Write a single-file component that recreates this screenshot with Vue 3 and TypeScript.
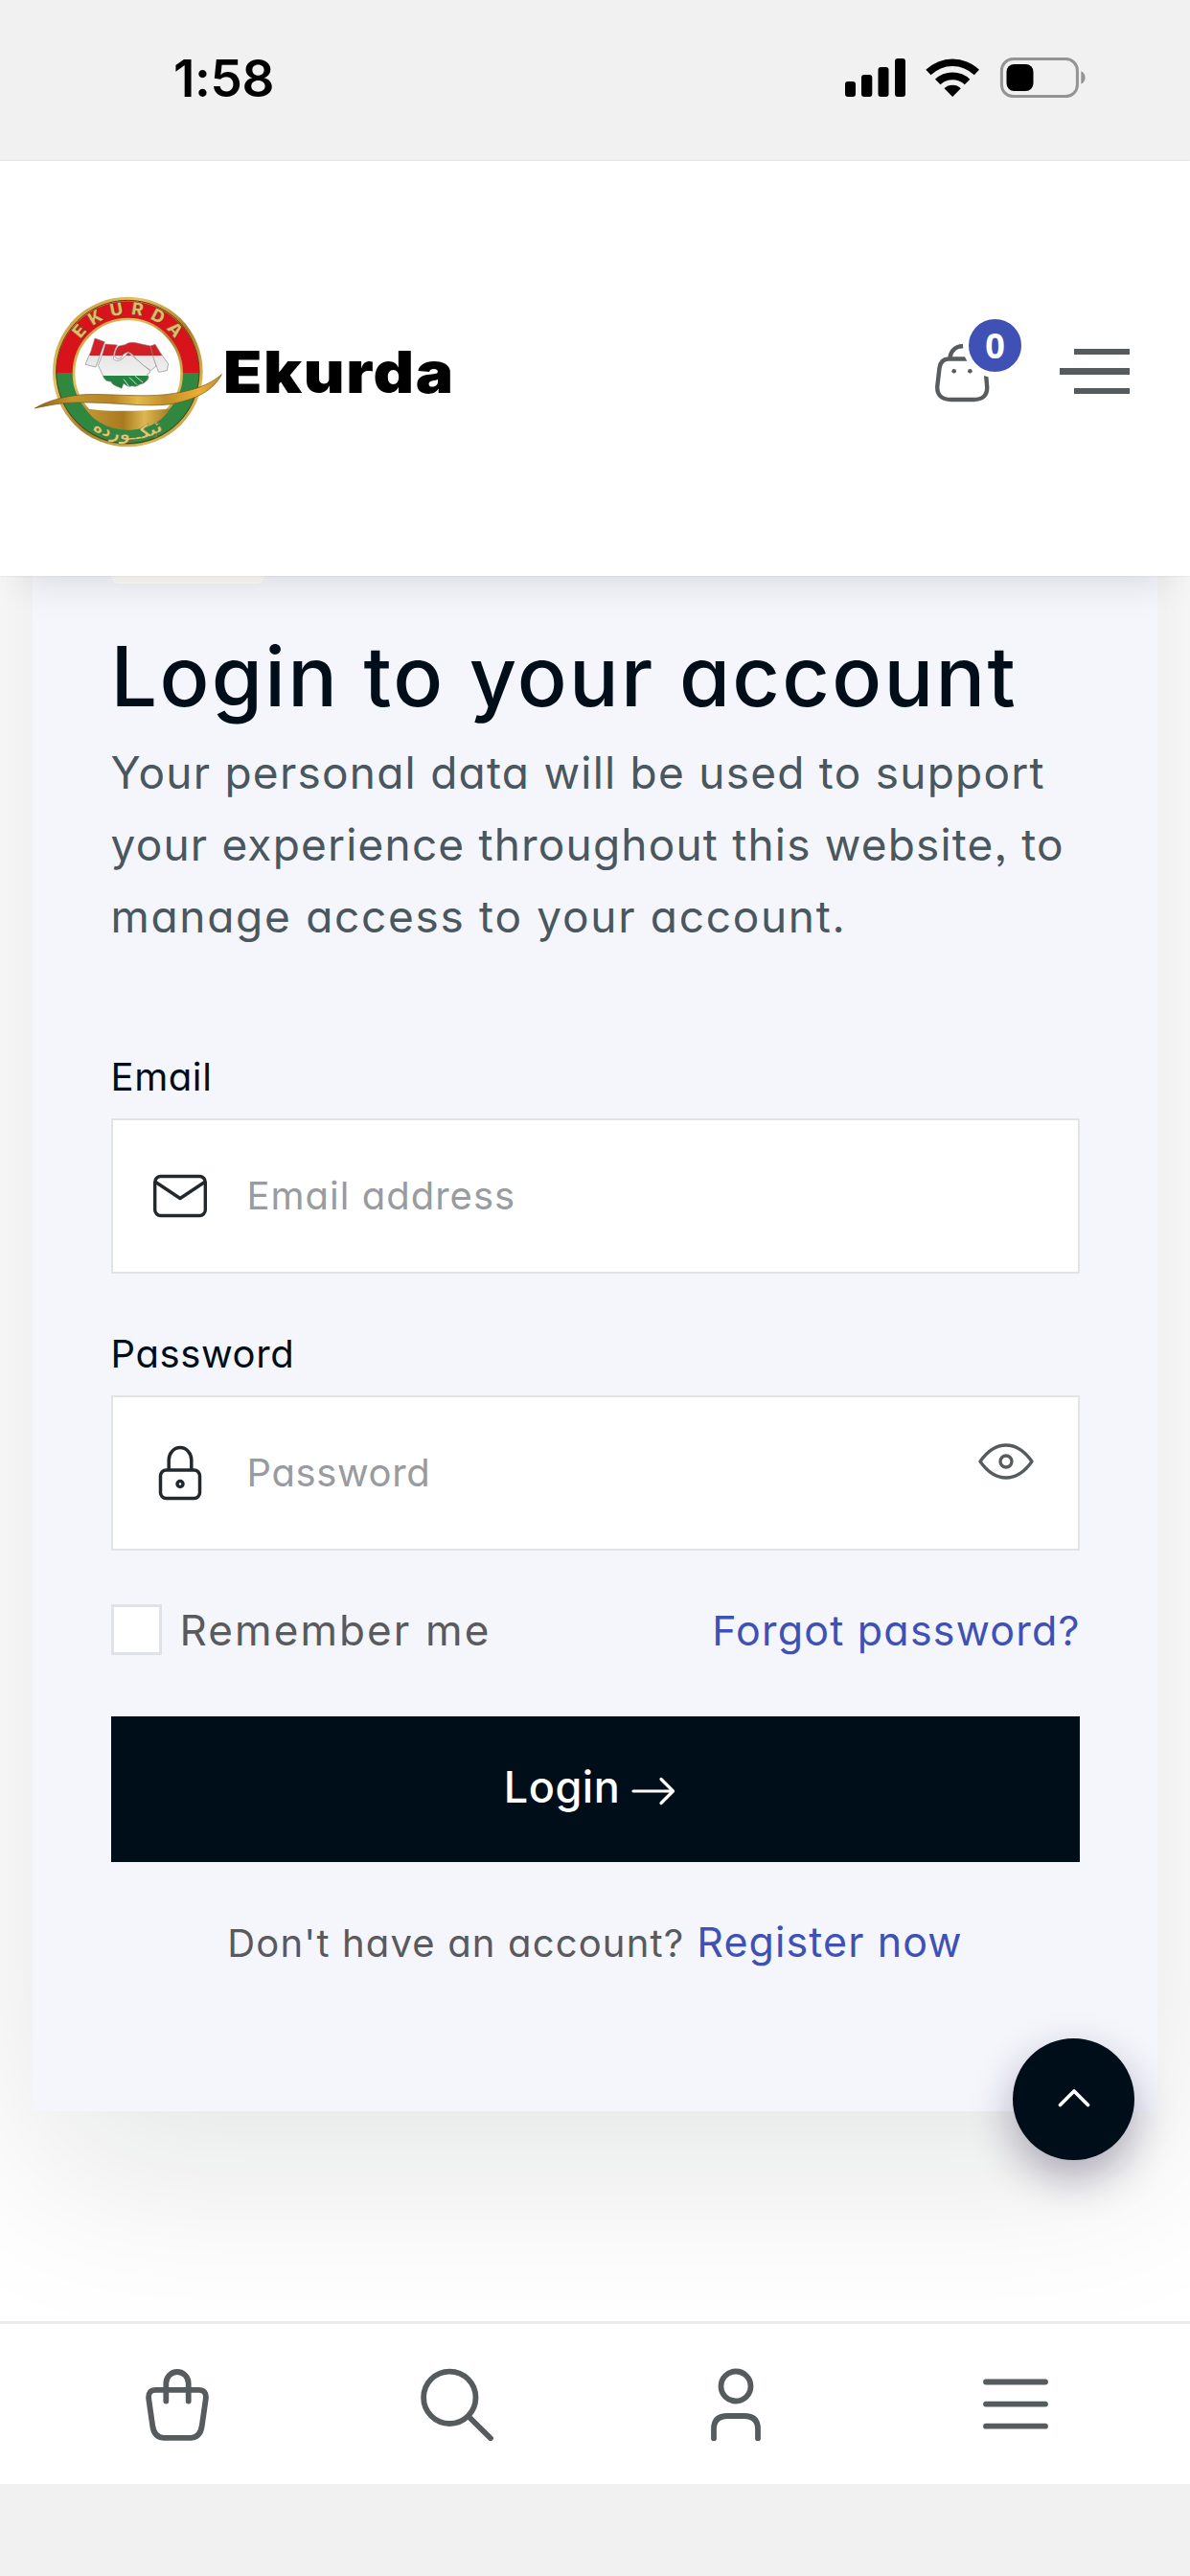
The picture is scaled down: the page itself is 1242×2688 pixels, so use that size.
<script setup lang="ts">
import { ref } from 'vue'

const email = ref('')
const password = ref('')
const remember = ref(false)
const cartCount = ref(0)
</script>

<template>
  <div class="screen">
    <div class="status">
      <span class="time">1:58</span>
      <svg class="indicators" width="252" height="42" viewBox="882 60 252 42">
        <rect x="882" y="85" width="11" height="16" rx="3" />
        <rect x="899" y="78" width="11.3" height="23" rx="3" />
        <rect x="916.5" y="70" width="11" height="31" rx="3" />
        <rect x="934" y="61" width="11" height="40" rx="3" />
        <path d="M966.3 72.8A40 40 0 0 1 1022 72.8L1016.8 78.3A32.2 32.2 0 0 0 971.5 78.3Z" />
        <path d="M976 82.8A26 26 0 0 1 1012.3 82.8L1006.8 88.3A18.3 18.3 0 0 0 981.5 88.3Z" />
        <path d="M985.5 92.3A12.5 12.5 0 0 1 1002.8 92.3L994.2 101Z" />
        <rect x="1045.4" y="61.6" width="79" height="39" rx="12" fill="none" stroke="#949494" stroke-width="3" />
        <rect x="1050.5" y="67" width="28" height="28" rx="8" />
        <path d="M1128.3 74.3A7.4 7.4 0 0 1 1128.3 87.7Z" fill="#949494" />
      </svg>
    </div>

    <header class="header">
      <div class="brand">
        <svg class="emblem" width="200" height="160" viewBox="100 80 600 480">
          <defs>
            <linearGradient id="gold" x1="0" y1="0" x2="1" y2="1">
              <stop offset="0" stop-color="#b98a2c" />
              <stop offset=".3" stop-color="#e6c465" />
              <stop offset=".55" stop-color="#a87c28" />
              <stop offset=".8" stop-color="#dfba59" />
              <stop offset="1" stop-color="#93691d" />
            </linearGradient>
            <linearGradient id="ribbon" x1="0" y1="0" x2="1" y2="0">
              <stop offset="0" stop-color="#8b651b" />
              <stop offset=".2" stop-color="#c3952e" />
              <stop offset=".42" stop-color="#b78628" />
              <stop offset=".55" stop-color="#e2b94b" />
              <stop offset=".7" stop-color="#c28f28" />
              <stop offset=".88" stop-color="#eaae34" />
              <stop offset="1" stop-color="#c58e25" />
            </linearGradient>
            <linearGradient id="bowl" x1="0" y1="0" x2="1" y2="0">
              <stop offset="0" stop-color="#c39737" />
              <stop offset=".45" stop-color="#a97a1f" />
              <stop offset=".7" stop-color="#ddb752" />
              <stop offset="1" stop-color="#a97a1f" />
            </linearGradient>
            <linearGradient id="flag" gradientUnits="userSpaceOnUse" x1="0" y1="210" x2="0" y2="375">
              <stop offset="0" stop-color="#d91f28" />
              <stop offset=".36" stop-color="#cf1f27" />
              <stop offset=".365" stop-color="#e6e6e6" />
              <stop offset=".74" stop-color="#f1f1f1" />
              <stop offset=".745" stop-color="#278543" />
              <stop offset="1" stop-color="#1f7b3c" />
            </linearGradient>
            <path id="arcTop" d="M222 320A179 179 0 0 1 580 320" />
            <path id="arcBottom" d="M188 320A213 213 0 0 0 614 320" />
          </defs>
          <circle cx="401" cy="320" r="235" fill="url(#gold)" />
          <path d="M177 323A224 224 0 0 1 625 323Z" fill="#d9131b" />
          <path d="M177 323A224 224 0 0 0 625 323Z" fill="#2f8740" />
          <circle cx="401" cy="320" r="224" fill="none" stroke="#5d3b12" stroke-width="3" />
          <circle cx="401" cy="324" r="169" fill="#fefefe" stroke="url(#gold)" stroke-width="8" />
          <path d="M268 434C330 447 440 443 532 436C512 474 461 502 401 502C344 502 292 474 268 434Z" fill="url(#bowl)" />
          <text font-family="Inter, sans-serif" font-weight="900" font-size="56" fill="#e0bb6d" stroke="#5e3b14" stroke-width="1.6">
            <textPath href="#arcTop" startOffset="50%" text-anchor="middle" textLength="346">EKURDA</textPath>
          </text>
          <text font-family="DejaVu Sans, sans-serif" font-weight="700" font-size="54" fill="#e0c878" stroke="#4d5a22" stroke-width="1">
            <textPath href="#arcBottom" startOffset="50%" text-anchor="middle">ئیکــورده</textPath>
          </text>
          <g fill="url(#flag)" stroke="#8c8680" stroke-width="2" stroke-linejoin="round">
            <path d="M298 215L329 226Q315 265 301 305L268 297Q288 256 298 215Z" />
            <path d="M331 233L368 236Q355 257 356 280Q372 294 392 272L402 260Q430 280 470 316Q474 323 462 328Q470 336 462 346Q454 356 438 360Q428 369 414 364Q402 370 388 356L382 372L366 365Q352 360 349 351L334 348Q324 340 322 328L308 300Q323 266 331 233Z" />
            <path d="M371 240L392 235Q410 223 434 231L472 239Q484 272 490 302L474 316Q450 302 428 280Q416 262 402 258Q386 262 379 278Q362 284 360 268Q362 252 371 240Z" />
            <path d="M472 239L487 234Q504 265 528 295L524 316L498 321Q480 280 472 239Z" />
          </g>
          <path d="M388 343L404 364M406 337L430 361M424 333L448 353" stroke="#d9e4da" stroke-width="3" fill="none" />
          <path d="M110 434C148 411 205 395 265 391C350 388 440 400 520 391C600 382 657 362 695 328C670 379 612 408 530 422C450 431 350 414 250 416C190 416 150 426 110 434Z" fill="url(#ribbon)" stroke="#765019" stroke-width="2" />
        </svg>
        <span class="wordmark">Ekurda</span>
      </div>
      <div class="actions">
        <div class="cart">
          <svg width="60" height="64" viewBox="975 354 60 64" fill="none" stroke="#585c5e" stroke-width="4.4">
            <path d="M991.5 371C992.5 364 998 358.5 1005.5 359.3Q1018 360 1019 371" />
            <path d="M990 372.5H1018Q1027 372.5 1028.500 382L1030.2 402Q1030.5 415 1016 415H993Q977.5 415 978.3 401L980.5 382Q982 372.5 990 372.5Z" />
            <circle cx="995.7" cy="385.3" r="2.3" fill="#585c5e" stroke="none" />
            <circle cx="1012.4" cy="385.3" r="2.3" fill="#585c5e" stroke="none" />
          </svg>
          <span class="badge">{{ cartCount }}</span>
        </div>
        <div class="burger"><i></i><i></i><i></i></div>
      </div>
    </header>

    <main class="main">
      <section class="card">
        <div class="card-icon"></div>
        <h1 class="title"><span>Login to your account</span></h1>
        <p class="lead">
          <span class="l1">Your personal data will be used to support</span>
          <span class="l2">your experience throughout this website, to</span>
          <span class="l3">manage access to your account.</span>
        </p>

        <label class="label first" for="email">Email</label>
        <div class="field">
          <svg width="56" height="46" viewBox="0 0 56 46" fill="none" stroke="#23282c" stroke-width="3.4" stroke-linejoin="round">
            <rect x="1.7" y="2.5" width="52.6" height="41" rx="6" />
            <path d="M2.5 8.5L28 25.5L53.5 8.5" />
          </svg>
          <input id="email" v-model="email" class="in-email" type="email" placeholder="Email address" />
        </div>

        <label class="label" for="password">Password</label>
        <div class="field">
          <svg width="56" height="58" viewBox="0 0 56 58" fill="none" stroke="#23282c" stroke-width="3.5">
            <path d="M16.2 26V15.5A11.8 13 0 0 1 39.8 15.5V26" />
            <rect x="7.5" y="26" width="41" height="29.5" rx="6" />
            <circle cx="28" cy="40.5" r="3" />
          </svg>
          <input id="password" v-model="password" class="in-pass" type="password" placeholder="Password" />
          <svg class="eye" width="58" height="42" viewBox="0 0 58 42" fill="none" stroke="#565b5d" stroke-width="3.3" stroke-linejoin="round">
            <path d="M2 21Q14 4 29 4T56 21Q44 38 29 38T2 21Z" />
            <circle cx="29" cy="21" r="6" />
          </svg>
        </div>

        <div class="row">
          <label class="check">
            <input v-model="remember" type="checkbox" />
            <span class="remember">Remember me</span>
          </label>
          <a class="link forgot">Forgot password?</a>
        </div>

        <button class="submit" type="button">
          <span class="login">Login</span>
          <svg width="46" height="32" viewBox="0 0 46 32" fill="none" stroke="#fff" stroke-width="3.2" stroke-linecap="round" stroke-linejoin="round">
            <path d="M2 16H43M31 3.5L43.5 16L31 28.5" />
          </svg>
        </button>

        <p class="signup"><span class="ask">Don't have an account?</span><a class="link register">Register now</a></p>
      </section>
      <button class="to-top" type="button" aria-label="Back to top">
        <svg width="36" height="24" viewBox="0 0 36 24" fill="none" stroke="#fff" stroke-width="3.8" stroke-linecap="round" stroke-linejoin="round">
          <path d="M3.5 19.5L18 5L32.5 19.5" />
        </svg>
      </button>
    </main>

    <nav class="nav">
      <svg width="76" height="76" viewBox="0 0 76 76">
        <path d="M16 22.800H60Q68.800 22.800 67.800 32L63.800 60Q62 72.800 52 72.800H24Q14 72.800 12.200 60L8.200 32Q7.200 22.800 16 22.800Z" />
        <path d="M26.3 34.5V16A11.7 12 0 0 1 49.7 16V34.5" />
      </svg>
      <svg width="76" height="76" viewBox="0 0 76 76">
        <circle cx="30.3" cy="30.8" r="27.2" />
        <path d="M50.5 51L73 73.3" />
      </svg>
      <svg width="76" height="76" viewBox="0 0 76 76">
        <circle cx="38" cy="19" r="15.5" />
        <path d="M15 73.500V63.500Q15 50 29.500 50H46.500Q61 50 61 63.500V73.500" />
      </svg>
      <svg width="76" height="76" viewBox="0 0 76 76">
        <path d="M7 14.5H69M7 37.6H69M7 60.7H69" />
      </svg>
    </nav>
    <div class="home-area"></div>
  </div>
</template>

<style>
body { margin: 0; }
</style>

<style scoped>
.screen {
  width: 1242px;
  height: 2688px;
  display: flex;
  flex-direction: column;
  overflow: hidden;
  background: #fff;
  font-family: Inter, "Open Sans", sans-serif;
  font-feature-settings: "cv11" 1, "ss03" 1;
}
.screen * { box-sizing: border-box; }
svg { display: block; flex: none; }
span, a, label { white-space: nowrap; }

.status {
  height: 168px;
  flex: none;
  display: flex;
  justify-content: space-between;
  align-items: center;
  padding: 0 108px 6px 181px;
  background: #f1f1f1;
}
.time { font-size: 53px; font-weight: 600; letter-spacing: -0.4px; line-height: 60px; padding-top: 2px; }

.header {
  position: relative;
  z-index: 2;
  height: 433px;
  flex: none;
  display: flex;
  justify-content: space-between;
  align-items: center;
  padding: 0 63px 0 33px;
  background: #fff;
  box-shadow: 0 32px 36px -24px rgba(0, 0, 10, 0.11), 0 0 2px rgba(0, 0, 0, 0.12);
}
.brand { display: flex; align-items: center; padding-top: 6px; }
.wordmark {
  font-size: 60px;
  font-weight: 900;
  line-height: 70px;
  letter-spacing: 1.5px;
  color: #000;
  font-feature-settings: normal;
  transform: scaleX(1.1);
  transform-origin: 0 50%;
}
.actions { display: flex; align-items: center; gap: 71px; padding-top: 6px; }
.cart { position: relative; }
.badge {
  position: absolute;
  left: 30px;
  top: -29px;
  width: 67px;
  height: 67px;
  border: 6px solid #fff;
  border-radius: 50%;
  background: #3f51b5;
  color: #fff;
  font: 700 36px/55px "Noto Sans", sans-serif;
  text-align: center;
}
.burger { display: flex; flex-direction: column; align-items: flex-end; gap: 14px; }
.burger i { width: 58px; height: 6.5px; background: #565b5d; }
.burger i:nth-child(2) { width: 73px; }

.main { position: relative; height: 1821px; flex: none; overflow: hidden; }
.card {
  height: 1902px;
  margin: -300px 34px 0;
  padding: 300px 81.5px 0;
  background: #f4f6fc;
  box-shadow: 0 60px 180px rgba(0, 19, 15, 0.11);
}
.card-icon { width: 160px; height: 8px; border-radius: 0 0 16px 16px; background: #fefdf9; }
.title { margin: 52px 0 0; font-size: 86px; font-weight: 500; line-height: 90px; color: #000e1a; letter-spacing: 2.3px; }
.lead { margin: 18px 0 0; display: flex; flex-direction: column; font-size: 46px; line-height: 75px; color: #4a575e; }
.l1 { letter-spacing: 1.24px; }
.l2 { letter-spacing: 1.18px; }
.l3 { letter-spacing: 1.7px; }
.label { display: block; margin-top: 59px; font-size: 40px; line-height: 50px; color: #000e1a; letter-spacing: 0.6px; }
.label.first { margin-top: 105px; }
.field {
  margin-top: 18px;
  height: 162px;
  display: flex;
  align-items: center;
  gap: 42px;
  padding: 0 46px 0 42px;
  border: 2.5px solid #e1e3e4;
  background: #fff;
}
.field input {
  flex: 1;
  min-width: 0;
  padding: 0;
  border: 0;
  background: none;
  font-family: inherit;
  font-feature-settings: inherit;
  font-size: 40px;
  line-height: 60px;
}
.in-email { letter-spacing: 1px; }
.in-pass { letter-spacing: 0.6px; }
.field input::placeholder { color: #989b9f; opacity: 1; }
.eye { margin-bottom: 24px; }
.row { margin-top: 56px; height: 53px; display: flex; justify-content: space-between; align-items: center; font-size: 43px; }
.check { display: flex; align-items: center; gap: 19px; color: #585a5e; }
.check input { appearance: none; width: 53px; height: 53px; margin: 0; border: 3px solid #dfe2e6; background: #fff; }
.remember { font-size: 44px; letter-spacing: 2.1px; }
.forgot { letter-spacing: 1.2px; margin-right: -1.2px; }
.link { color: #3f51b5; }
.submit {
  margin-top: 64px;
  width: 100%;
  height: 152px;
  display: flex;
  align-items: center;
  justify-content: center;
  gap: 12px;
  padding: 0 11px 5px 0;
  border: 0;
  background: #000e1a;
  color: #fff;
  font-family: inherit;
  font-feature-settings: inherit;
  font-size: 45px;
  font-weight: 500;
}
.login { letter-spacing: 0.5px; }
.submit svg { margin-top: 9px; }
.signup { margin: 53px 0 0; display: flex; justify-content: center; align-items: baseline; gap: 13px; line-height: 60px; color: #585a5e; font-size: 40px; }
.ask { letter-spacing: 1.15px; }
.register { font-size: 43px; letter-spacing: 1.1px; }
.to-top {
  position: absolute;
  right: 58px;
  bottom: 168px;
  width: 127px;
  height: 127px;
  display: flex;
  align-items: center;
  justify-content: center;
  padding: 0 0 4px;
  border: 0;
  border-radius: 50%;
  background: #000e1a;
  box-shadow: 0 18px 45px rgba(22, 10, 50, 0.32);
}
.nav {
  height: 170px;
  flex: none;
  display: flex;
  justify-content: space-between;
  align-items: center;
  padding: 0 144px 0 147px;
  border-top: 3px solid #eaecec;
  background: #fff;
}
.nav svg { fill: none; stroke: #565b5d; stroke-width: 5.8; stroke-linecap: round; stroke-linejoin: round; }
.home-area { flex: 1; background: #f1f1f1; }
</style>
